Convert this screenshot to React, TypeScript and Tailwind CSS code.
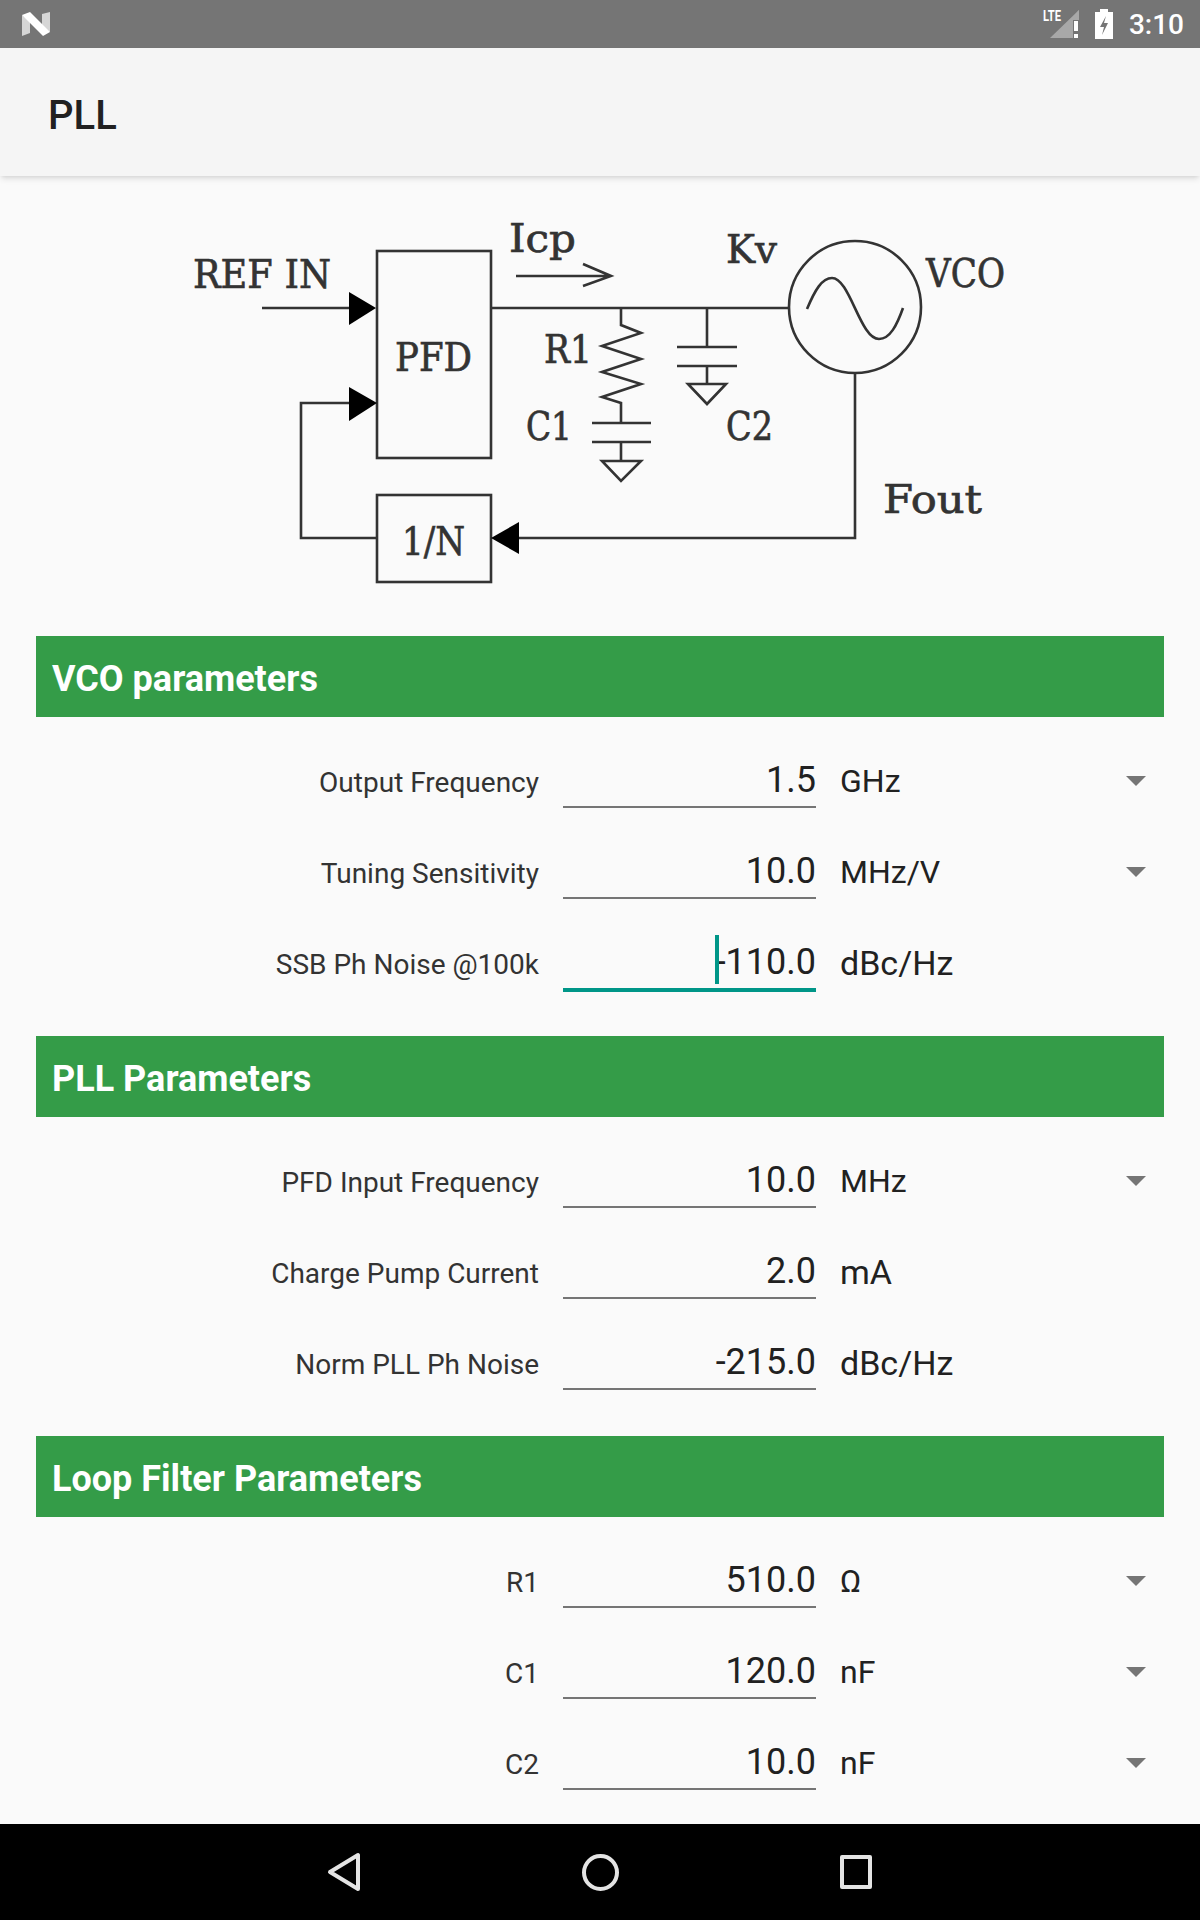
const sections = [
  {
    title: "VCO parameters",
    rows: [
      { label: "Output Frequency", value: "1.5", unit: "GHz", spinner: true },
      { label: "Tuning Sensitivity", value: "10.0", unit: "MHz/V", spinner: true },
      { label: "SSB Ph Noise @100k", value: "-110.0", unit: "dBc/Hz", focused: true },
    ],
  },
  {
    title: "PLL Parameters",
    rows: [
      { label: "PFD Input Frequency", value: "10.0", unit: "MHz", spinner: true },
      { label: "Charge Pump Current", value: "2.0", unit: "mA" },
      { label: "Norm PLL Ph Noise", value: "-215.0", unit: "dBc/Hz" },
    ],
  },
  {
    title: "Loop Filter Parameters",
    rows: [
      { label: "R1", value: "510.0", unit: "Ω", spinner: true },
      { label: "C1", value: "120.0", unit: "nF", spinner: true },
      { label: "C2", value: "10.0", unit: "nF", spinner: true },
    ],
  },
];

const diagramLabels = [
  { text: "REF IN", x: 193, y: 288, w: 138 },
  { text: "Icp", x: 509, y: 252, w: 67 },
  { text: "PFD", x: 395, y: 371, w: 77 },
  { text: "R1", x: 544, y: 363, w: 48 },
  { text: "C1", x: 526, y: 440, w: 46 },
  { text: "1/N", x: 402, y: 555, w: 63 },
  { text: "Kv", x: 726, y: 263, w: 51 },
  { text: "VCO", x: 926, y: 287, w: 79 },
  { text: "C2", x: 726, y: 440, w: 47 },
  { text: "Fout", x: 883, y: 513, w: 99 },
];

function StatusBar() {
  return (
    <div className="flex h-12 shrink-0 items-center justify-between bg-[#757575] pl-[22px] pr-[16px]">
      <svg width="28" height="24" viewBox="22 12 28 24">
        <polygon points="22,15 30,21 30,33 22,36" fill="#d6d6d6" />
        <polygon points="42,14 50,12 50,32 42,27" fill="#d6d6d6" />
        <polygon points="22,15 30,12 50,32 43,36" fill="#ffffff" />
      </svg>
      <div className="flex items-center">
        <svg width="42" height="40" viewBox="1040 4 42 40">
          <polygon points="1080,10 1080,38 1051,38" fill="#a8a8a8" />
          <text x="1044" y="21" fontSize="15" fontWeight="700" textLength="18" lengthAdjust="spacingAndGlyphs" fill="#ffffff" className="font-['Roboto',sans-serif]">
            LTE
          </text>
          <rect x="1074" y="20" width="7" height="19" fill="#757575" />
          <polygon points="1080,20 1080,10 1075,16 1075,20" fill="#a8a8a8" />
          <rect x="1075" y="21" width="4" height="10" fill="#ffffff" />
          <rect x="1075" y="34" width="4" height="4" fill="#ffffff" />
        </svg>
        <svg width="18" height="30" viewBox="0 0 18 30" className="ml-[14px]">
          <path d="M5 0h8v3h5v27H0V3h5z" fill="#ffffff" />
          <path d="M11 7 5 18h4l-2 8 6-12H9z" fill="#757575" />
        </svg>
        <span className="ml-[16px] mt-[2px] text-[28px] leading-none font-medium text-white">3:10</span>
      </div>
    </div>
  );
}

function Diagram() {
  return (
    <svg viewBox="0 176 1200 460" className="block h-[460px] w-full shrink-0">
      <g fill="none" stroke="#333333" strokeWidth="2.6">
        <rect x="377" y="251" width="114" height="207" />
        <rect x="377" y="495" width="114" height="87" />
        <path d="M262 308H349" />
        <path d="M349 403H301V538H377" />
        <path d="M519 538H855V373" />
        <circle cx="855" cy="307" r="66" />
        <path d="M491 308H789" />
        <path d="M516 276H611M583 264 611 276 583 286" />
        <path d="M621 308V325L641 333 602 346 641 359 602 372 641 384 602 397 621 403V423" />
        <path d="M592 423H651M592 442H651M621 442V461" />
        <path d="M602 461H641L621 481Z" />
        <path d="M707 308V347M677 347H737M677 366H737M707 366V384" />
        <path d="M688 384H726L707 404Z" />
        <path d="M807 309C815 290 822 278 832 278C850 278 860 339 879 339C890 339 897 325 903 308" />
      </g>
      <g fill="#000000">
        <polygon points="376,308 349,292 349,325" />
        <polygon points="377,403 349,387 349,421" />
        <polygon points="491,538 519,522 519,554" />
      </g>
      <g fill="#333333" stroke="#333333" strokeWidth="0.7" fontSize="40" className="font-['DejaVu_Serif',serif]">
        {diagramLabels.map((l) => (
          <text key={l.text} x={l.x} y={l.y} textLength={l.w} lengthAdjust="spacingAndGlyphs">
            {l.text}
          </text>
        ))}
      </g>
    </svg>
  );
}

function Row({ label, value, unit, spinner, focused }: { label: string; value: string; unit: string; spinner?: boolean; focused?: boolean }) {
  return (
    <div className="flex h-[91px] items-end">
      <div className="w-[503px] pb-[7px] text-right text-[28px] leading-[36px] text-[#333333]">{label}</div>
      <div className={focused ? "relative -mb-[2px] ml-6 h-[60px] w-[253px] border-b-4 border-[#009688] pt-[7px] text-right text-[36px] leading-[46px] text-[#212121]" : "ml-6 h-[60px] w-[253px] border-b-2 border-[#757575] pt-[9px] text-right text-[36px] leading-[46px] text-[#212121]"}>
        <span className="relative inline-block">
          {focused && <span className="absolute -left-[1px] -top-[4px] h-[49px] w-1 bg-[#009688]" />}
          {value}
        </span>
      </div>
      <div className={spinner ? "ml-6 flex flex-1 items-center justify-between pb-[5px] pr-[18px] text-[32px] leading-[44px] text-[#212121]" : "ml-6 flex flex-1 items-center justify-between pb-[5px] text-[34px] leading-[44px] text-[#212121]"}>
        <span>{unit}</span>
        {spinner && <span className="h-0 w-0 border-x-[10px] border-t-[10px] border-x-transparent border-t-[#757575]" />}
      </div>
    </div>
  );
}

function NavBar() {
  return (
    <div className="flex h-24 shrink-0 items-center justify-center bg-black">
      <div className="flex w-[256px] justify-center">
        <svg width="34" height="40" viewBox="0 0 34 40" fill="none" stroke="#e4e4e4" strokeWidth="4" strokeLinejoin="round">
          <path d="M31 3V37L3 20Z" />
        </svg>
      </div>
      <div className="flex w-[256px] justify-center">
        <div className="h-[37px] w-[37px] rounded-full border-4 border-[#e4e4e4]" />
      </div>
      <div className="flex w-[256px] justify-center">
        <div className="h-[34px] w-[32px] rounded-[2px] border-4 border-[#e4e4e4]" />
      </div>
    </div>
  );
}

export default function App() {
  return (
    <div className="flex h-[1920px] w-[1200px] flex-col overflow-hidden bg-[#fafafa] font-['Roboto',sans-serif]">
      <StatusBar />
      <div className="relative z-10 flex h-32 shrink-0 items-center bg-[#f5f5f5] pl-12 pt-2 shadow-md">
        <h1 className="text-[40px] leading-none font-medium text-[#212121]">PLL</h1>
      </div>
      <div className="flex min-h-0 flex-1 flex-col">
        <Diagram />
        <div className="flex flex-col gap-[46px] px-9">
          {sections.map((s) => (
            <section key={s.title}>
              <h2 className="flex h-[81px] items-center bg-[#349c48] pl-4 pt-[5px] text-[36px] font-bold text-white">{s.title}</h2>
              {s.rows.map((r) => (
                <Row key={r.label} {...r} />
              ))}
            </section>
          ))}
        </div>
      </div>
      <NavBar />
    </div>
  );
}
